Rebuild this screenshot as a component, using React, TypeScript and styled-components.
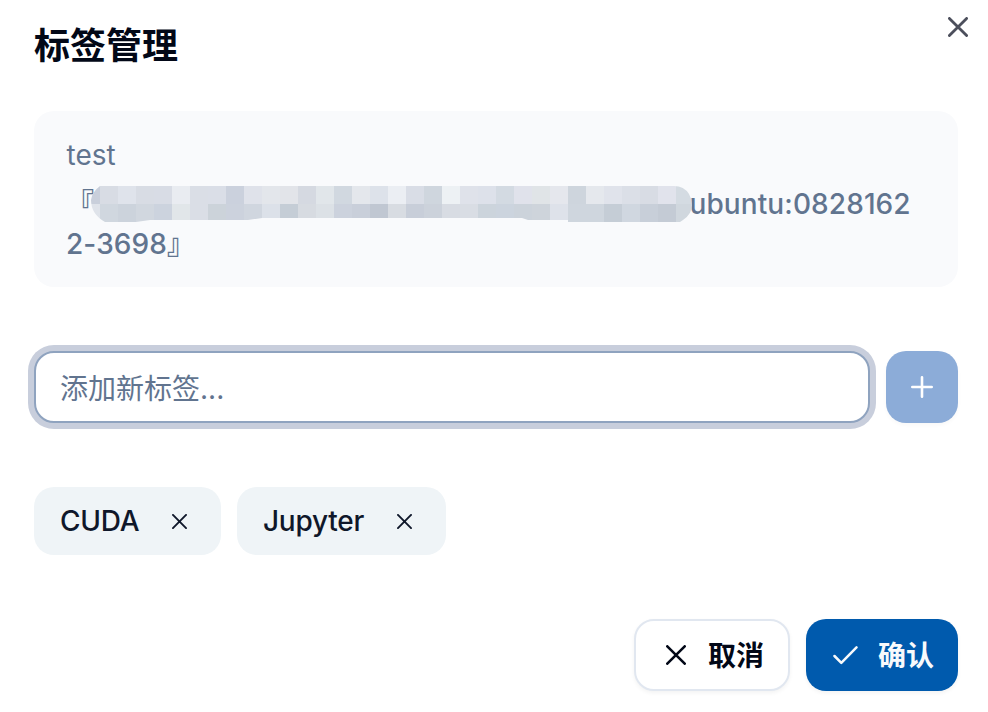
import React from 'react';
import styled, { createGlobalStyle } from 'styled-components';

const GlobalStyle = createGlobalStyle`
  * { box-sizing: border-box; }
  body {
    margin: 0;
    background: #fff;
    color: #020817;
    font-family: Inter, "Noto Sans CJK SC", sans-serif;
    font-size: 28px;
    line-height: 40px;
  }
  button, input { font: inherit; }
`;

const Dialog = styled.main`
  width: 988px;
  height: 712px;
  padding: 27px 30px 21px 34px;
  display: flex;
  flex-direction: column;
  background: #fff;
`;

const Header = styled.header`
  display: flex;
  justify-content: space-between;
  height: 36px;
  margin-bottom: 48px;
`;

const Title = styled.h1`
  margin: 0;
  padding-top: 1px;
  font-size: 36px;
  line-height: 36px;
  font-weight: 600;
`;

const CloseButton = styled.button`
  width: 32px;
  height: 32px;
  margin: -16px -16px 0 0;
  padding: 0;
  display: grid;
  place-items: center;
  border: 0;
  background: none;
  color: #4c4f5c;
`;

const InfoCard = styled.section`
  height: 176px;
  padding: 24px 32px;
  border-radius: 20px;
  background: #f9fafc;
  color: #61748f;
`;

const InstanceName = styled.div`
  margin-bottom: 8px;
  padding-left: 0.5px;
`;

const ImageName = styled.div`
  font-weight: 500;
  letter-spacing: 0.1px;
`;

const NameLine = styled.div`
  display: flex;
  height: 40px;
  padding-top: 1px;
  white-space: nowrap;
`;

const Bracket = styled.span`
  width: 28px;
  font-weight: 700;
`;

const Redaction = styled.svg`
  flex: none;
  width: 601px;
  height: 36px;
  margin: 2px -2.5px 0 -3px;
  z-index: 1;
`;

const AddRow = styled.div`
  display: flex;
  gap: 16px;
  margin-top: 64px;
`;

const TagInput = styled.input`
  flex: 1;
  min-width: 0;
  height: 72px;
  padding: 3px 24px 0;
  border: 2px solid #8fa3bf;
  border-radius: 20px;
  outline: none;
  box-shadow: 0 0 0 6px #c8cedc;
  background: #fff;
  &::placeholder { color: #61748f; opacity: 1; }
`;

const AddButton = styled.button`
  width: 72px;
  height: 72px;
  padding: 0;
  display: grid;
  place-items: center;
  border: 0;
  border-radius: 20px;
  background: #8cacd8;
  color: #fff;
  box-shadow: 0 2px 4px rgba(0, 0, 0, 0.03);
`;

const TagList = styled.div`
  display: flex;
  gap: 16px;
  margin-top: 64px;
`;

const Tag = styled.div<{ $width: number }>`
  width: ${(p) => p.$width}px;
  height: 68px;
  padding: 0 34.5px 0 26px;
  display: flex;
  align-items: center;
  justify-content: space-between;
  border-radius: 20px;
  background: #eff4f7;
  color: #0f172a;
  font-weight: 500;
  letter-spacing: -0.25px;
`;

const RemoveButton = styled.button`
  padding: 0;
  display: flex;
  border: 0;
  background: none;
  color: inherit;
`;

const Footer = styled.footer`
  display: flex;
  justify-content: flex-end;
  gap: 16px;
  margin-top: 64px;
`;

const ActionButton = styled.button<{ $primary?: boolean }>`
  width: ${(p) => (p.$primary ? 152 : 156)}px;
  height: 72px;
  padding: ${(p) => (p.$primary ? '0 24px 0 26px' : '0 24px 0 30px')};
  display: flex;
  align-items: center;
  justify-content: space-between;
  border: ${(p) => (p.$primary ? '0' : '2px solid #e1e7f0')};
  border-radius: 20px;
  background: ${(p) => (p.$primary ? '#005aad' : '#fff')};
  color: ${(p) => (p.$primary ? '#f8fafc' : '#020817')};
  font-weight: 600;
  box-shadow: 0 2px 4px rgba(0, 0, 0, 0.05);
`;

const ActionLabel = styled.span`
  padding-top: 2px;
`;

const Cross = ({ size, stroke }: { size: number; stroke: number }) => (
  <svg width={size} height={size} viewBox={`0 0 ${size} ${size}`} fill="none" stroke="currentColor" strokeWidth={stroke} strokeLinecap="round">
    <path d={`M${stroke / 2} ${stroke / 2}L${size - stroke / 2} ${size - stroke / 2}M${size - stroke / 2} ${stroke / 2}L${stroke / 2} ${size - stroke / 2}`} />
  </svg>
);

const upperCells =
  'c9cfdb d8dce4 dfe3eb d8dce4 d8dce5 e9ecf1 dadee6 dadee7 cbd1dd dfe2ea e3e6eb e2e4e9 d5d9e1 e1e6ea d1d8e0 e4e7ec dde2ea ebeef3 d9dde6 cfd6de edf1f4 dfe2ea dde1ea d3dae2 e0e2eb e0e4e7 e5e7ed ced5dd e5e8ed e0e3eb dbdfe7 d8dce4 e1e3ec d4dbe2'.split(' ');
const lowerCells =
  'dfe3ea d0d7df ccd3dc d1d7df ccd3de e1e6e9 dadee6 ccd3da ccd2dd d0d6df dce1e9 c5cdd6 d7dbe1 dce1e6 ccd2dd c9cfda c0c7d2 d8dce2 c8ced9 ccd2db d8dce3 d9dde4 ccd4dc ccd4de ccd3db ced4db dee2ea cfd6de cfd6de c5cdd6 d0d7e0 c8cfd9 c4cbd5 d0d7de'.split(' ');

const Mosaic = () => (
  <Redaction viewBox="0 0 601 36" aria-hidden="true">
    <clipPath id="redaction">
      <path d="M9 0H583Q593 0 598 8Q601 13 601 19Q601 28 592 34L589 36H477V34H437L431 32H171L157 34H59L45 36H14Q0 28 0 14Q1 6 9 0Z" />
    </clipPath>
    <g clipPath="url(#redaction)" shapeRendering="crispEdges">
      {[upperCells, lowerCells].map((row, y) =>
        row.map((color, x) => (
          <rect key={`${x}-${y}`} x={x * 18 - 9} y={y * 18} width="18" height="18" fill={`#${color}`} />
        )),
      )}
    </g>
  </Redaction>
);

const tags = [
  { name: 'CUDA', width: 187 },
  { name: 'Jupyter', width: 209 },
];

export default function App() {
  return (
    <>
      <GlobalStyle />
      <Dialog>
        <Header>
          <Title>标签管理</Title>
          <CloseButton aria-label="关闭"><Cross size={20} stroke={2.8} /></CloseButton>
        </Header>
        <InfoCard>
          <InstanceName>test</InstanceName>
          <ImageName>
            <NameLine><Bracket>『</Bracket><Mosaic /><span>ubuntu:0828162</span></NameLine>
            <NameLine><span>2-3698</span><Bracket>』</Bracket></NameLine>
          </ImageName>
        </InfoCard>
        <AddRow>
          <TagInput placeholder="添加新标签..." />
          <AddButton aria-label="添加">
            <svg width="22" height="22" viewBox="0 0 22 22" fill="none" stroke="currentColor" strokeWidth="2.6" strokeLinecap="round">
              <path d="M11 1.3V20.7M1.3 11H20.7" />
            </svg>
          </AddButton>
        </AddRow>
        <TagList>
          {tags.map((tag) => (
            <Tag key={tag.name} $width={tag.width}>
              <span>{tag.name}</span>
              <RemoveButton aria-label="移除"><Cross size={15} stroke={1.9} /></RemoveButton>
            </Tag>
          ))}
        </TagList>
        <Footer>
          <ActionButton><Cross size={20} stroke={2.6} /><ActionLabel>取消</ActionLabel></ActionButton>
          <ActionButton $primary>
            <svg width="26" height="20" viewBox="0 0 26 20" fill="none" stroke="currentColor" strokeWidth="2.5" strokeLinecap="round" strokeLinejoin="round">
              <path d="M2.5 11L9.3 17.8L24.5 2.3" />
            </svg>
            <ActionLabel>确认</ActionLabel>
          </ActionButton>
        </Footer>
      </Dialog>
    </>
  );
}
